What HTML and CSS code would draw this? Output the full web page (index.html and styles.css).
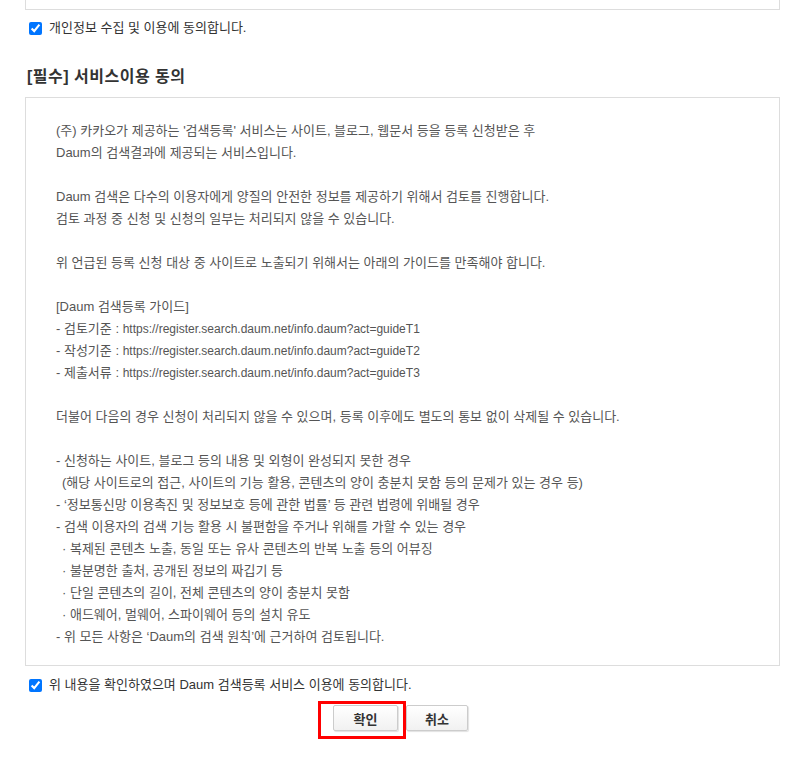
FILE: index.html
```html
<!DOCTYPE html>
<html lang="ko">

<head>
    <meta charset="UTF-8">
    <title>검색등록 약관 동의</title>
    <link rel="stylesheet" href="styles.css">
</head>

<body>
<div class="wrap">
    <div class="box box_prev"></div>

    <div class="agree">
        <input type="checkbox" id="agree_privacy" checked>
        <label for="agree_privacy">개인정보 수집 및 이용에 동의합니다.</label>
    </div>

    <h3 class="tit">[필수] 서비스이용 동의</h3>

    <div class="box terms">
        <p>(주) 카카오가 제공하는 '검색등록' 서비스는 사이트, 블로그, 웹문서 등을 등록 신청받은 후<br>
            Daum의 검색결과에 제공되는 서비스입니다.</p>
        <p>Daum 검색은 다수의 이용자에게 양질의 안전한 정보를 제공하기 위해서 검토를 진행합니다.<br>
            검토 과정 중 신청 및 신청의 일부는 처리되지 않을 수 있습니다.</p>
        <p>위 언급된 등록 신청 대상 중 사이트로 노출되기 위해서는 아래의 가이드를 만족해야 합니다.</p>
        <p>[Daum 검색등록 가이드]<br>
            - 검토기준 : <span class="url">https://register.search.daum.net/info.daum?act=guideT1</span><br>
            - 작성기준 : <span class="url">https://register.search.daum.net/info.daum?act=guideT2</span><br>
            - 제출서류 : <span class="url">https://register.search.daum.net/info.daum?act=guideT3</span></p>
        <p>더불어 다음의 경우 신청이 처리되지 않을 수 있으며, 등록 이후에도 별도의 통보 없이 삭제될 수 있습니다.</p>
        <ul class="list">
            <li>- 신청하는 사이트, 블로그 등의 내용 및 외형이 완성되지 못한 경우</li>
            <li class="sub">(해당 사이트로의 접근, 사이트의 기능 활용, 콘텐츠의 양이 충분치 못함 등의 문제가 있는 경우 등)</li>
            <li>- ‘정보통신망 이용촉진 및 정보보호 등에 관한 법률’ 등 관련 법령에 위배될 경우</li>
            <li>- 검색 이용자의 검색 기능 활용 시 불편함을 주거나 위해를 가할 수 있는 경우</li>
            <li class="sub">· 복제된 콘텐츠 노출, 동일 또는 유사 콘텐츠의 반복 노출 등의 어뷰징</li>
            <li class="sub">· 불분명한 출처, 공개된 정보의 짜깁기 등</li>
            <li class="sub">· 단일 콘텐츠의 길이, 전체 콘텐츠의 양이 충분치 못함</li>
            <li class="sub">· 애드웨어, 멀웨어, 스파이웨어 등의 설치 유도</li>
            <li>- 위 모든 사항은 ‘Daum의 검색 원칙’에 근거하여 검토됩니다.</li>
        </ul>
    </div>

    <div class="agree agree_last">
        <input type="checkbox" id="agree_service" checked>
        <label for="agree_service">위 내용을 확인하였으며 Daum 검색등록 서비스 이용에 동의합니다.</label>
    </div>

    <div class="btns">
        <span class="btn_mark">
            <button type="button" class="btn btn_ok">확인</button>
        </span>
        <button type="button" class="btn btn_cancel">취소</button>
    </div>
</div>
</body>

</html>
```

FILE: styles.css
```css
html,
body {
    margin: 0;
    background: #fff;
    font-family: "Liberation Sans", "Noto Sans CJK KR", sans-serif;
    font-size: 13px;
    color: #333;
}

.wrap {
    width: 755px;
    margin-left: 25px;
    padding-bottom: 27px;
}

.box {
    box-sizing: border-box;
    border: 1px solid #ddd;
}

.box_prev {
    height: 10px;
    border-top: 0;
}

.agree {
    display: flex;
    align-items: center;
    height: 20px;
    margin-top: 8px;
}

.agree_last {
    margin-top: 9px;
}

.agree input {
    width: 13px;
    height: 13px;
    margin: 0 0 0 4px;
}

.agree label {
    margin-left: 7px;
    line-height: 20px;
    color: #333;
}

.tit {
    margin: 29px 0 0 2px;
    font-size: 16px;
    font-weight: bold;
    letter-spacing: 0.5px;
    line-height: 20px;
    color: #333;
}

.terms {
    margin-top: 10px;
    height: 569px;
    padding: 22px 30px 0 30px;
    color: #555;
    line-height: 22px;
}

.terms p {
    margin: 0 0 22px;
}

.url {
    font-size: 12px;
}

.list {
    margin: 0;
    padding: 0;
    list-style: none;
}

.list .sub {
    padding-left: 6px;
}

.btns {
    display: flex;
    justify-content: center;
    margin-top: 10px;
    padding-right: 4px;
}

.btn_mark {
    position: relative;
    display: flex;
}

.btn_mark::after {
    content: "";
    position: absolute;
    left: -15px;
    top: -4px;
    right: -8px;
    bottom: -8px;
    border: 3px solid #f00;
}

.btn {
    height: 26px;
    border: 1px solid #ccc;
    border-radius: 2px;
    padding: 0;
    background: linear-gradient(#fff, #f1f1f1);
    box-shadow: 1px 1px 1px rgba(0, 0, 0, 0.12);
    font-family: "Liberation Sans", "Noto Sans CJK KR", sans-serif;
    font-size: 13px;
    font-weight: bold;
    color: #333;
    cursor: pointer;
}

.btn_ok {
    width: 65px;
}

.btn_cancel {
    width: 62px;
    margin-left: 8px;
}
```
